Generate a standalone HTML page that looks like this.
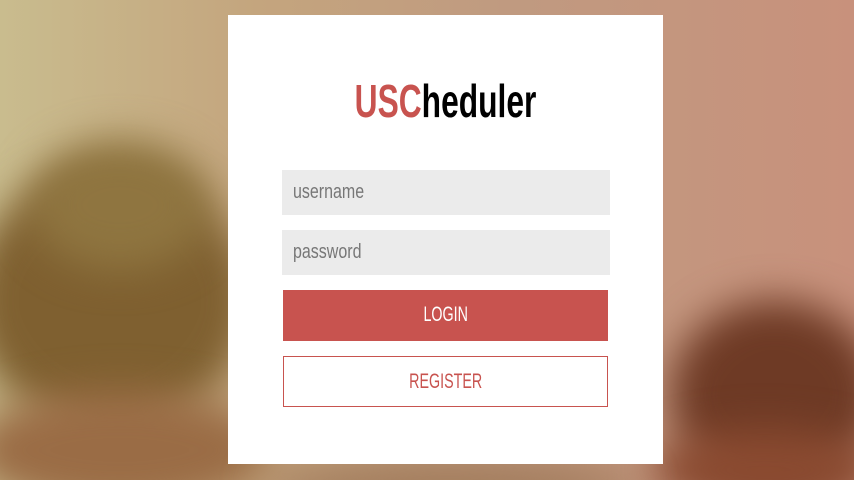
<!DOCTYPE html>
<html><head><meta charset="utf-8"><style>
html,body{margin:0;width:854px;height:480px;overflow:hidden}
body{position:relative;font-family:"Liberation Sans",sans-serif}
.wrap{position:absolute;left:0;top:0;width:854px;height:480px;overflow:hidden}
.bg{position:absolute;inset:0;background:linear-gradient(90deg,#c9bc8e 0%,#c4a57e 30%,#c09a80 60%,#c8917c 100%)}
.b{position:absolute;border-radius:50%;filter:blur(20px)}
.card{position:absolute;left:228px;top:15px;width:435px;height:449px;background:#fff}
.logo{position:absolute;left:0;right:0;top:60px;text-align:center;font-size:46px;font-weight:bold;color:#000;transform:scaleX(0.69);line-height:52px}
.logo span{color:#c8534f}
.inp{position:absolute;left:54px;width:328px;height:45px;background:#ebebeb;box-sizing:border-box}
.inp i{position:absolute;left:11px;top:0;font-style:normal;color:#777;font-size:20px;line-height:45px;transform:scaleX(0.8);transform-origin:left}
.btn{position:absolute;left:55px;width:325px;height:51px;box-sizing:border-box;text-align:center;line-height:50px;font-size:21px}
.btn i{display:inline-block;font-style:normal;transform:scaleX(0.68)}
</style></head><body>
<div class="wrap">
<div class="bg"></div>
<div class="b" style="left:-30px;top:170px;width:280px;height:260px;background:#7f6030"></div>
<div class="b" style="left:30px;top:140px;width:180px;height:130px;background:#8f7540"></div>
<div class="b" style="left:-30px;top:390px;width:300px;height:120px;background:#9a6c45"></div>
<div class="b" style="left:670px;top:300px;width:210px;height:190px;background:#6e3a25"></div>
<div class="b" style="left:650px;top:430px;width:230px;height:80px;background:#8a4a30"></div>
<div class="b" style="left:260px;top:460px;width:380px;height:50px;background:#a07a5a"></div>
</div>
<div class="card">
<div class="logo"><span>USC</span>heduler</div>
<div class="inp" style="top:155px"><i>username</i></div>
<div class="inp" style="top:215px"><i>password</i></div>
<div class="btn" style="top:275px;background:#c8534f;color:#fff"><i>LOGIN</i></div>
<div class="btn" style="top:341px;border:1px solid #c8534f;color:#c8534f"><i>REGISTER</i></div>
</div>
</body></html>
